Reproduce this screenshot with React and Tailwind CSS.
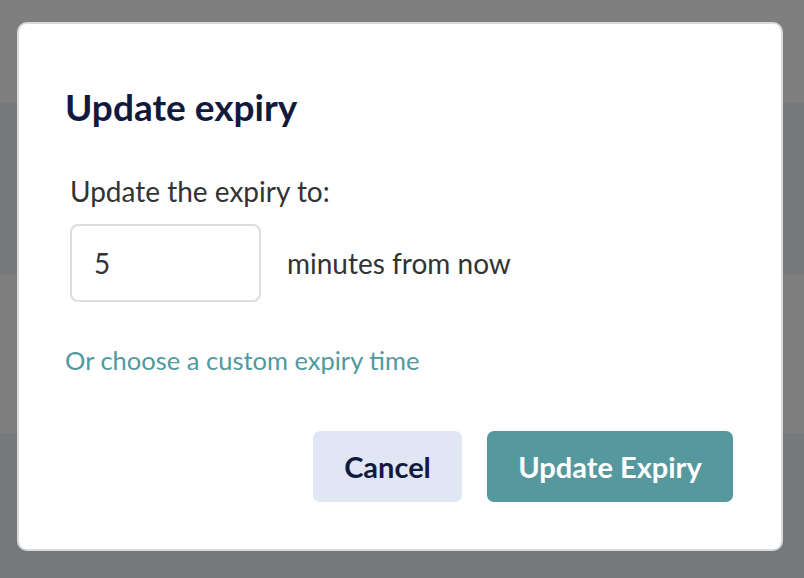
import React from "react";

export default function App() {
  return (
    <div className="relative w-[804px] h-[578px] overflow-hidden" style={{ fontFamily: "Lato, 'Open Sans', sans-serif" }}>
      <div className="flex flex-col w-full h-full">
        <div className="h-[103px] bg-[#7f7f7f]" />
        <div className="h-[172px] bg-[#76797c]" />
        <div className="h-[158px] bg-[#7f7f7f]" />
        <div className="flex-1 bg-[#76797c]" />
      </div>
      <div className="absolute left-[17px] top-[22px] w-[766px] bg-white rounded-[10px] border-2 border-[#dadada] pt-[61px] pb-[47px] pl-[46px] pr-[48px]">
        <h2 className="text-[37px] leading-[44px] font-bold text-[#111a3d]">Update expiry</h2>
        <div className="ml-[5px] mt-[45px]">
          <p className="text-[28px] leading-[34px] text-[#333333]">Update the expiry to:</p>
          <div className="mt-[16px] flex items-center gap-[26px]">
            <div className="w-[191px] h-[78px] border-2 border-[#dddddd] rounded-[8px] flex items-center pl-[22px] text-[28px] text-[#333333]">5</div>
            <span className="text-[28px] leading-[34px] text-[#333333]">minutes from now</span>
          </div>
        </div>
        <p className="mt-[43px] text-[25.5px] leading-[31px] text-[#4f9aa0]">Or choose a custom expiry time</p>
        <div className="mt-[55px] flex justify-end gap-[25px]">
          <button className="w-[149px] h-[71px] rounded-[7px] bg-[#e1e6f4] text-[#111a3d] text-[29px] font-bold">Cancel</button>
          <button className="w-[246px] h-[71px] rounded-[7px] bg-[#55999f] text-white text-[29px] font-bold">Update Expiry</button>
        </div>
      </div>
    </div>
  );
}
